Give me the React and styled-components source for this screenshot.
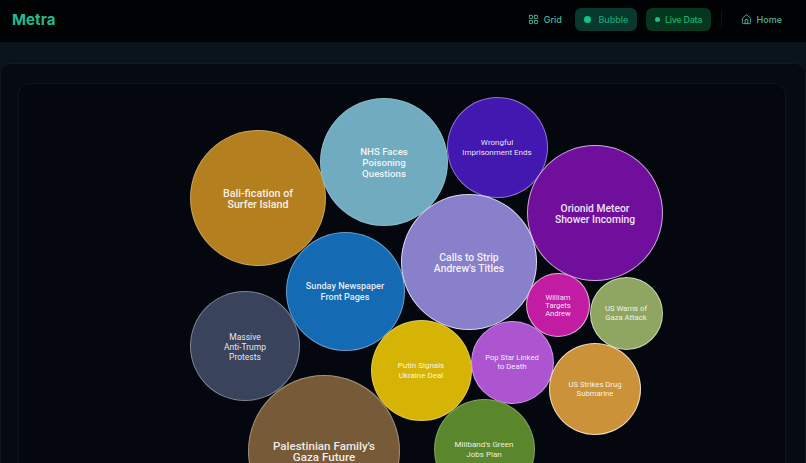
import { Fragment } from "react";
import styled, { createGlobalStyle } from "styled-components";
import { LayoutGrid, House } from "lucide-react";

const bubbles = [
  { id: 1, title: ["Palestinian Family's", "Gaza Future"], x: 324, y: 451, size: 152, color: "#775a37", font: 11.6, leading: 11, ring: 0.35 },
  { id: 2, title: ["Bali-fication of", "Surfer Island"], x: 258, y: 198, size: 136, color: "#b47f1f", font: 10.7, leading: 11, ring: 0.3 },
  { id: 3, title: ["NHS Faces", "Poisoning", "Questions"], x: 384, y: 162, size: 128, color: "#70abbf", font: 9.7, leading: 11, ring: 0.2 },
  { id: 4, title: ["Wrongful", "Imprisonment Ends"], x: 497, y: 147, size: 101, color: "#4318b0", font: 8, leading: 9.5, ring: 0.4 },
  { id: 5, title: ["Orionid Meteor", "Shower Incoming"], x: 595, y: 213, size: 136, color: "#6f0f9c", font: 10.3, leading: 11, ring: 0.65 },
  { id: 6, title: ["Sunday Newspaper", "Front Pages"], x: 345, y: 291, size: 119, color: "#146ab3", font: 9.1, leading: 11, ring: 0.35 },
  { id: 7, title: ["Calls to Strip", "Andrew's Titles"], x: 469, y: 262, size: 136, color: "#8880ca", font: 10.4, leading: 11, ring: 0.7 },
  { id: 8, title: ["Massive", "Anti-Trump", "Protests"], x: 245, y: 346, size: 110, color: "#3a435c", font: 8.5, leading: 10, ring: 0.35 },
  { id: 9, title: ["William", "Targets", "Andrew"], x: 558, y: 305, size: 64, color: "#c21ca3", font: 7.6, leading: 8, ring: 0.65 },
  { id: 10, title: ["US Warns of", "Gaza Attack"], x: 626, y: 313, size: 73, color: "#8ea661", font: 7.7, leading: 8.5, ring: 0.55 },
  { id: 11, title: ["Pop Star Linked", "to Death"], x: 512, y: 362, size: 83, color: "#ad55d0", font: 7.7, leading: 8.5, ring: 0.4 },
  { id: 12, title: ["Putin Signals", "Ukraine Deal"], x: 421, y: 370, size: 101, color: "#d5b406", font: 8, leading: 9.5, ring: 0.3 },
  { id: 13, title: ["US Strikes Drug", "Submarine"], x: 595, y: 389, size: 92, color: "#cb923a", font: 7.7, leading: 8.5, ring: 0.7 },
  { id: 14, title: ["Miliband's Green", "Jobs Plan"], x: 484, y: 449, size: 101, color: "#5a872b", font: 8, leading: 9.5, ring: 0.25 },
];

export default function App() {
  return (
    <>
      <GlobalStyle />
      <Page>
        <TopBar>
          <Logo>Metra</Logo>
          <Nav>
            <NavItem>
              <LayoutGrid size={11} strokeWidth={2} />
              Grid
            </NavItem>
            <NavPill $tone="bubble">
              <Dot $size={7} />
              Bubble
            </NavPill>
            <NavPill $tone="live">
              <Dot $size={5} />
              Live Data
            </NavPill>
            <Divider />
            <NavItem>
              <House size={11} strokeWidth={2} />
              Home
            </NavItem>
          </Nav>
        </TopBar>
        <Content>
          <OuterCard>
            <Chart>
              {bubbles.map((bubble) => (
                <Bubble
                  key={bubble.id}
                  $x={bubble.x}
                  $y={bubble.y}
                  $size={bubble.size}
                  $color={bubble.color}
                  $font={bubble.font}
                  $leading={bubble.leading}
                  $ring={bubble.ring}
                >
                  <BubbleTitle $light={bubble.font <= 8.5}>
                    {bubble.title.map((line, i) => (
                      <Fragment key={line}>
                        {i > 0 && <br />}
                        {line}
                      </Fragment>
                    ))}
                  </BubbleTitle>
                </Bubble>
              ))}
            </Chart>
          </OuterCard>
        </Content>
      </Page>
    </>
  );
}

const GlobalStyle = createGlobalStyle`
  html, body {
    margin: 0;
    height: 100%;
    background: #0a141c;
    overflow: hidden;
  }
  body {
    font-family: "Inter", "Liberation Sans", sans-serif;
  }
`;

const Page = styled.div`
  width: 806px;
  height: 463px;
  display: flex;
  flex-direction: column;
  overflow: hidden;
`;

const TopBar = styled.header`
  height: 42px;
  flex-shrink: 0;
  box-sizing: border-box;
  display: flex;
  align-items: center;
  justify-content: space-between;
  padding: 0 20px 4px 12px;
  background: #010203;
`;

const Logo = styled.div`
  font-size: 15px;
  font-weight: 700;
  color: #27b88c;
  letter-spacing: 0.1px;
`;

const Nav = styled.nav`
  display: flex;
  align-items: center;
  gap: 9px;
`;

const NavItem = styled.div`
  display: flex;
  align-items: center;
  gap: 5px;
  height: 23px;
  padding: 0 4px;
  font-size: 9px;
  font-weight: 500;
  color: #4fb598;
`;

const NavPill = styled(NavItem)`
  border-radius: 6px;
  padding: 0 8.5px 0 9px;
  gap: ${(p) => (p.$tone === "bubble" ? "7.5px" : "5px")};
  letter-spacing: ${(p) => (p.$tone === "live" ? "-0.3px" : "0")};
  background: ${(p) => (p.$tone === "bubble" ? "#07392e" : "#06361f")};
  color: ${(p) => (p.$tone === "bubble" ? "#14a877" : "#16b36b")};
`;

const Dot = styled.span`
  width: ${(p) => p.$size}px;
  height: ${(p) => p.$size}px;
  border-radius: 50%;
  background: #10c585;
`;

const Divider = styled.span`
  width: 1px;
  height: 16px;
  background: #0d1518;
  margin: 0 6px 0 1px;
`;

const Content = styled.main`
  flex: 1;
  min-height: 0;
  padding-top: 21px;
`;

const OuterCard = styled.section`
  height: 100%;
  box-sizing: border-box;
  padding: 19px 19px 0 17px;
  background: #060b11;
  border: 1px solid #0e1a20;
  border-bottom: 0;
  border-radius: 10px 10px 0 0;
`;

const Chart = styled.div`
  position: relative;
  height: 100%;
  background: #04080e;
  border: 1px solid #0c1519;
  border-bottom: 0;
  border-radius: 12px 12px 0 0;
`;

/* x and y are page coordinates of the centre, chart inner origin is 19,84 */
const Bubble = styled.div`
  position: absolute;
  left: ${(p) => p.$x - p.$size / 2 - 19}px;
  top: ${(p) => p.$y - p.$size / 2 - 84}px;
  width: ${(p) => p.$size}px;
  height: ${(p) => p.$size}px;
  box-sizing: border-box;
  display: flex;
  align-items: center;
  justify-content: center;
  padding-top: 1.5px;
  border-radius: 50%;
  background: ${(p) => p.$color};
  border: 1px solid rgba(255, 255, 255, ${(p) => p.$ring});
  color: rgba(255, 255, 255, 0.9);
  font-family: "Roboto", "Liberation Sans", sans-serif;
  font-size: ${(p) => p.$font}px;
  line-height: ${(p) => p.$leading}px;
`;

const BubbleTitle = styled.div`
  font-weight: ${(p) => (p.$light ? 400 : 500)};
  text-align: center;
  white-space: nowrap;
`;
